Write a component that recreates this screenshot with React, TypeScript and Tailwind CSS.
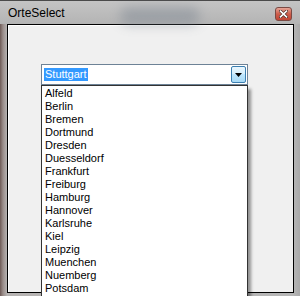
const cities = [
  "Alfeld", "Berlin", "Bremen", "Dortmund", "Dresden", "Duesseldorf",
  "Frankfurt", "Freiburg", "Hamburg", "Hannover", "Karlsruhe", "Kiel",
  "Leipzig", "Muenchen", "Nuemberg", "Potsdam", "Stuttgart",
];

export default function App() {
  const font = "font-['Liberation_Sans',Arial,sans-serif]";

  return (
    <div className={`relative w-[300px] h-[296px] overflow-hidden flex flex-col bg-[linear-gradient(90deg,#6e5a56_0px,#9a8d8a_3px,#b6b3b2_7px,#b6b6b6_293px,#a9a9a9_300px)] ${font}`}>
      {/* title bar */}
      <div className="relative h-[24px] shrink-0 flex items-center pl-[8px] pr-[8px] border-t border-[#4a4a4a] bg-[linear-gradient(180deg,#c4c4c4,#b4b4b4)]">
        <div className="absolute left-[120px] top-[6px] w-[80px] h-[18px] rounded-full bg-[#6f7a88] opacity-40 blur-[6px]" />
        <span className="relative text-[12px] text-black leading-none">OrteSelect</span>
        <div className="relative ml-auto mt-[3px] w-[17px] h-[14px] rounded-[3px] border border-[#7a4a44] bg-[linear-gradient(180deg,#e6a597,#cd5c4a_50%,#c04535)] flex items-center justify-center">
          <svg width="9" height="8" viewBox="0 0 9 8">
            <path d="M1.5 1.2 L7.5 6.8 M7.5 1.2 L1.5 6.8" stroke="#4a2a26" strokeWidth="3" strokeLinecap="square" />
            <path d="M1.5 1.2 L7.5 6.8 M7.5 1.2 L1.5 6.8" stroke="#ffffff" strokeWidth="1.6" strokeLinecap="square" />
          </svg>
        </div>
      </div>

      {/* client area */}
      <div className="ml-[7px] w-[287px] h-[269px] border border-black bg-[#f0f0f0] shadow-[inset_1px_1px_0_#ffffff]">
        <div className="pl-[33px] pt-[39px]">
          <div className="relative w-[207px] h-[21px] bg-white border border-[#6d8296] flex items-center">
            <span className="ml-[2px] h-[13px] px-[1px] bg-[#3399ff] text-white text-[11px] leading-[13px]">Stuttgart</span>
            <div className="ml-auto mr-[1px] w-[15px] h-[17px] border border-[#3c7fb1] rounded-[2px] bg-[linear-gradient(180deg,#eaf6fd,#d6effc_45%,#bee6fd_50%,#a7d9f5)] flex items-center justify-center">
              <svg width="7" height="4" viewBox="0 0 7 4">
                <path d="M0 0 H7 L3.5 4 Z" fill="#000" />
              </svg>
            </div>

            {/* dropdown list */}
            <div className="absolute left-[-1px] top-[20px] w-[207px] h-[230px] bg-white border border-[#333] shadow-[3px_4px_3px_rgba(0,0,0,0.4)] z-10 pt-[1px]">
              {cities.slice(0, 16).map((c) => (
                <div key={c} className="h-[13px] pl-[3px] text-[11px] leading-[13px] text-black">
                  {c}
                </div>
              ))}
            </div>
          </div>
        </div>
      </div>
    </div>
  );
}
